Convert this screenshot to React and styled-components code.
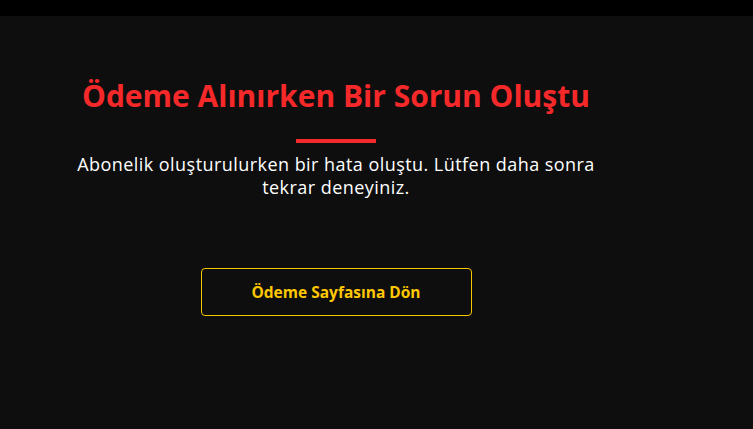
import React from "react";
import styled, { createGlobalStyle } from "styled-components";

const GlobalStyle = createGlobalStyle`
  html, body {
    margin: 0;
    padding: 0;
    background: #0e0e0e;
    font-family: "Open Sans", "Noto Sans", sans-serif;
  }
`;

const Page = styled.div`
  min-height: 429px;
  background: #0e0e0e;
`;

const TopBar = styled.div`
  height: 16px;
  background: #000;
`;

const Column = styled.div`
  width: 672px;
  display: flex;
  flex-direction: column;
  align-items: center;
  padding-top: 62px;
`;

const Title = styled.h1`
  margin: 0;
  color: #f5282a;
  font-size: 30px;
  font-weight: 700;
  line-height: 36px;
`;

const Divider = styled.div`
  width: 80px;
  height: 4px;
  background: #f5282a;
  margin-top: 25px;
`;

const Message = styled.p`
  margin: 10px 0 0;
  width: 540px;
  color: #fff;
  font-size: 18px;
  letter-spacing: 0.45px;
  line-height: 23px;
  text-align: center;
`;

const BackButton = styled.button`
  margin-top: 69px;
  width: 271px;
  height: 48px;
  background: transparent;
  border: 1px solid #f7c600;
  border-radius: 4px;
  color: #ffc800;
  font-family: inherit;
  font-size: 15.5px;
  font-weight: 700;
  cursor: pointer;
`;

const App = () => {
  return (
    <Page>
      <GlobalStyle />
      <TopBar />
      <Column>
        <Title>Ödeme Alınırken Bir Sorun Oluştu</Title>
        <Divider />
        <Message>
          Abonelik oluşturulurken bir hata oluştu. Lütfen daha sonra tekrar deneyiniz.
        </Message>
        <BackButton>Ödeme Sayfasına Dön</BackButton>
      </Column>
    </Page>
  );
};

export default App;
